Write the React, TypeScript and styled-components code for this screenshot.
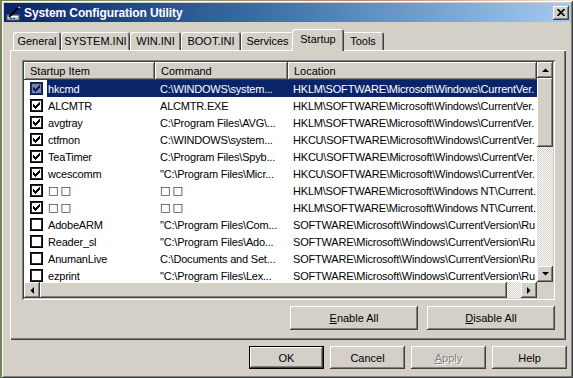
import React from 'react';
import styled, { createGlobalStyle, css } from 'styled-components';

const face = '#D4D0C8';
const shadow = '#808080';
const dark = '#404040';

const GlobalStyle = createGlobalStyle`
  html, body { margin: 0; padding: 0; }
  body {
    width: 573px;
    height: 378px;
    overflow: hidden;
    background: linear-gradient(90deg, #71825a 0%, #8f9a78 35%, #b08a82 62%, #c9a6a0 78%, #e8e8e0 100%);
    font-family: "Liberation Sans", Arial, sans-serif;
    font-size: 11px;
  }
`;

const raised = css`
  box-shadow: inset -1px -1px ${dark}, inset 1px 1px #fff, inset -2px -2px ${shadow}, inset 2px 2px ${face};
`;

const sunken = css`
  box-shadow: inset 1px 1px ${shadow}, inset -1px -1px #fff, inset 2px 2px ${dark}, inset -2px -2px ${face};
`;

const dither = css`
  background: repeating-conic-gradient(${face} 0 25%, #fff 0 50%) 0 0 / 2px 2px;
`;

const Window = styled.div`
  margin: 1px 0 0 2px;
  width: 571px;
  height: 377px;
  box-sizing: border-box;
  padding: 2px 2px 0 2px;
  background: ${face};
  ${raised};
  display: flex;
  flex-direction: column;
`;

const TitleBar = styled.div`
  height: 19px;
  display: flex;
  align-items: center;
  padding-left: 2px;
  background: linear-gradient(90deg, #0a246a 0%, #3a6ea5 45%, #a6caf0 100%);
  color: #fff;
  font-weight: bold;
  font-size: 12px;
  letter-spacing: -0.1px;
`;

const TitleText = styled.span`
  margin-left: 2px;
  flex: 1;
  white-space: nowrap;
`;

const CloseButton = styled.div`
  width: 16px;
  height: 14px;
  margin-right: 2px;
  box-sizing: border-box;
  background: ${face};
  ${raised};
  display: flex;
  align-items: center;
  justify-content: center;
`;

const Body = styled.div`
  padding: 7px 4px 0 6px;
  display: flex;
  flex-direction: column;
`;

const TabStrip = styled.div`
  display: flex;
  align-items: flex-end;
  height: 21px;
  padding-left: 3px;
`;

const Tab = styled.div<{ $w: number; $active?: boolean }>`
  width: ${p => (p.$active ? p.$w + 4 : p.$w)}px;
  height: ${p => (p.$active ? 22 : 18)}px;
  margin: ${p => (p.$active ? '0 -2px -1px' : '0')};
  position: ${p => (p.$active ? 'relative' : 'static')};
  z-index: ${p => (p.$active ? 1 : 0)};
  box-sizing: border-box;
  padding-top: ${p => (p.$active ? 4 : 3)}px;
  text-align: center;
  background: ${face};
  border-radius: 3px 3px 0 0;
  box-shadow: inset 1px 1px #fff, inset -1px 0 ${dark}, inset -2px 0 ${shadow};
  white-space: nowrap;
`;

const Panel = styled.div`
  height: 290px;
  margin-right: 1px;
  box-sizing: border-box;
  padding: 10px 11px 0 12px;
  background: ${face};
  box-shadow: inset 1px 1px #fff, inset -1px -1px ${dark}, inset -2px -2px ${shadow};
`;

const ListView = styled.div`
  height: 240px;
  box-sizing: border-box;
  padding: 2px;
  background: #fff;
  ${sunken};
  display: grid;
  grid-template-columns: 1fr 16px;
  grid-template-rows: 220px 16px;
  overflow: hidden;
`;

const ListMain = styled.div`
  overflow: hidden;
  display: flex;
  flex-direction: column;
`;

const HeaderRow = styled.div`
  display: grid;
  grid-template-columns: 131px 133px 1fr;
  height: 18px;
  flex: none;
`;

const HeaderCell = styled.div`
  box-sizing: border-box;
  padding: 3px 0 0 6px;
  background: ${face};
  box-shadow: inset -1px -1px ${dark}, inset 1px 1px #fff, inset -2px -2px ${shadow};
  white-space: nowrap;
  overflow: hidden;
`;

const Row = styled.div`
  display: grid;
  grid-template-columns: 131px 133px 1fr;
  height: 17px;
  flex: none;
  letter-spacing: -0.2px;
`;

const FirstCell = styled.div`
  display: flex;
  align-items: center;
  padding-left: 6px;
  overflow: hidden;
`;

const Cell = styled.div<{ $sel?: boolean }>`
  display: flex;
  align-items: center;
  padding-left: ${p => (p.$sel ? 0 : 5)}px;
  white-space: nowrap;
  overflow: hidden;
  background: ${p => (p.$sel ? '#0a246a' : 'transparent')};
  color: ${p => (p.$sel ? '#fff' : '#000')};
`;

const Label = styled(Cell)`
  flex: 1;
  align-self: stretch;
  margin-left: 4px;
  padding-left: 1px;
`;

const SelCell = styled(Cell)`
  padding-left: 5px;
`;

const Tofu = styled.span`
  font-family: "DejaVu Sans", sans-serif;
  font-size: 11px;
  letter-spacing: 2px;
`;

const Box = styled.div<{ $sel?: boolean }>`
  width: 13px;
  height: 13px;
  flex: none;
  box-sizing: border-box;
  border: 1px solid ${p => (p.$sel ? '#0a1a50' : '#000')};
  box-shadow: inset 0 0 0 1px ${p => (p.$sel ? '#202c68' : '#2a2a2a')};
  background: ${p => (p.$sel ? '#7a80a8' : '#fff')};
  display: flex;
  align-items: center;
  justify-content: center;
`;

const VScroll = styled.div`
  display: flex;
  flex-direction: column;
  ${dither};
`;

const HScroll = styled.div`
  display: flex;
  ${dither};
`;

const ArrowButton = styled.div`
  width: 16px;
  height: 16px;
  flex: none;
  box-sizing: border-box;
  background: ${face};
  ${raised};
  display: flex;
  align-items: center;
  justify-content: center;
`;

const Thumb = styled.div<{ $len: number; $vertical?: boolean }>`
  ${p => (p.$vertical ? `height: ${p.$len}px;` : `width: ${p.$len}px;`)}
  flex: none;
  background: ${face};
  ${raised};
`;

const Track = styled.div`
  flex: 1;
`;

const Corner = styled.div`
  background: ${face};
`;

const PanelButtons = styled.div`
  display: flex;
  justify-content: flex-end;
  gap: 9px;
  margin-top: 6px;
`;

const Button = styled.button<{ $w?: number; $h?: number; $default?: boolean }>`
  width: ${p => p.$w ?? 75}px;
  height: ${p => p.$h ?? 23}px;
  padding: 0;
  margin: 0;
  border: ${p => (p.$default ? '1px solid #000' : 'none')};
  background: ${face};
  ${raised};
  font-family: "Liberation Sans", Arial, sans-serif;
  font-size: 11px;
  color: #000;
  &:disabled {
    color: ${shadow};
    text-shadow: 1px 1px #fff;
  }
`;

const DialogButtons = styled.div`
  display: flex;
  justify-content: flex-end;
  gap: 6px;
  margin-top: 6px;
`;

type Dir = 'up' | 'down' | 'left' | 'right';

const Arrow = ({ dir }: { dir: Dir }) => {
  const pts: Record<Dir, string> = {
    up: '0,4 7,4 3.5,0.5',
    down: '0,0 7,0 3.5,3.5',
    left: '4,0 4,7 0.5,3.5',
    right: '0,0 0,7 3.5,3.5',
  };
  const vert = dir === 'up' || dir === 'down';
  return (
    <svg width={vert ? 7 : 4} height={vert ? 4 : 7} viewBox={vert ? '0 0 7 4' : '0 0 4 7'}>
      <polygon points={pts[dir]} fill="#000" />
    </svg>
  );
};

const Check = ({ color }: { color: string }) => (
  <svg width="7" height="7" viewBox="0 0 7 7">
    {[2, 3, 4, 3, 2, 1, 0].map((y, x) => (
      <rect key={x} x={x} y={y} width="1" height="3" fill={color} />
    ))}
  </svg>
);

const AppIcon = () => (
  <svg width="16" height="16" viewBox="0 0 16 16">
    <rect x="1" y="10" width="12" height="5" fill="#c8c8c8" stroke="#606060" strokeWidth="1" />
    <rect x="2" y="11" width="10" height="1" fill="#fff" />
    <path d="M3 12 L12 3" stroke="#000" strokeWidth="2" />
    <path d="M11 2 L14 1 L14.5 4 Z" fill="#fff" stroke="#202020" strokeWidth="0.8" />
    <rect x="4" y="13" width="2" height="1" fill="#1d3c9a" />
    <rect x="7" y="13" width="2" height="1" fill="#1d3c9a" />
  </svg>
);

const CloseGlyph = () => (
  <svg width="8" height="7" viewBox="0 0 8 7">
    <path d="M0.5 0 L7.5 7 M7.5 0 L0.5 7" stroke="#000" strokeWidth="1.6" />
  </svg>
);

interface Item {
  name: string;
  cmd: string;
  loc: string;
  on: boolean;
}

const TOFU = '□□';

const items: Item[] = [
  { name: 'hkcmd', cmd: 'C:\\WINDOWS\\system...', loc: 'HKLM\\SOFTWARE\\Microsoft\\Windows\\CurrentVer.', on: true },
  { name: 'ALCMTR', cmd: 'ALCMTR.EXE', loc: 'HKLM\\SOFTWARE\\Microsoft\\Windows\\CurrentVer.', on: true },
  { name: 'avgtray', cmd: 'C:\\Program Files\\AVG\\...', loc: 'HKLM\\SOFTWARE\\Microsoft\\Windows\\CurrentVer.', on: true },
  { name: 'ctfmon', cmd: 'C:\\WINDOWS\\system...', loc: 'HKCU\\SOFTWARE\\Microsoft\\Windows\\CurrentVer.', on: true },
  { name: 'TeaTimer', cmd: 'C:\\Program Files\\Spyb...', loc: 'HKCU\\SOFTWARE\\Microsoft\\Windows\\CurrentVer.', on: true },
  { name: 'wcescomm', cmd: '"C:\\Program Files\\Micr...', loc: 'HKCU\\SOFTWARE\\Microsoft\\Windows\\CurrentVer.', on: true },
  { name: TOFU, cmd: TOFU, loc: 'HKLM\\SOFTWARE\\Microsoft\\Windows NT\\Current.', on: true },
  { name: TOFU, cmd: TOFU, loc: 'HKLM\\SOFTWARE\\Microsoft\\Windows NT\\Current.', on: true },
  { name: 'AdobeARM', cmd: '"C:\\Program Files\\Com...', loc: 'SOFTWARE\\Microsoft\\Windows\\CurrentVersion\\Ru', on: false },
  { name: 'Reader_sl', cmd: '"C:\\Program Files\\Ado...', loc: 'SOFTWARE\\Microsoft\\Windows\\CurrentVersion\\Ru', on: false },
  { name: 'AnumanLive', cmd: 'C:\\Documents and Set...', loc: 'SOFTWARE\\Microsoft\\Windows\\CurrentVersion\\Ru', on: false },
  { name: 'ezprint', cmd: '"C:\\Program Files\\Lex...', loc: 'SOFTWARE\\Microsoft\\Windows\\CurrentVersion\\Ru', on: false },
];

const tabs = [
  { label: 'General', w: 48 },
  { label: 'SYSTEM.INI', w: 69 },
  { label: 'WIN.INI', w: 51 },
  { label: 'BOOT.INI', w: 60 },
  { label: 'Services', w: 53 },
  { label: 'Startup', w: 48, active: true },
  { label: 'Tools', w: 42 },
];

const show = (s: string) => (s === TOFU ? <Tofu>{s}</Tofu> : s);

export default function App() {
  return (
    <>
      <GlobalStyle />
      <Window>
        <TitleBar>
          <AppIcon />
          <TitleText>System Configuration Utility</TitleText>
          <CloseButton>
            <CloseGlyph />
          </CloseButton>
        </TitleBar>
        <Body>
          <TabStrip>
            {tabs.map(t => (
              <Tab key={t.label} $w={t.w} $active={t.active}>
                {t.label}
              </Tab>
            ))}
          </TabStrip>
          <Panel>
            <ListView>
              <ListMain>
                <HeaderRow>
                  <HeaderCell>Startup Item</HeaderCell>
                  <HeaderCell>Command</HeaderCell>
                  <HeaderCell>Location</HeaderCell>
                </HeaderRow>
                {items.map((it, i) => {
                  const sel = i === 0;
                  return (
                    <Row key={i}>
                      <FirstCell>
                        <Box $sel={sel}>{it.on && <Check color={sel ? '#0a1a50' : '#000'} />}</Box>
                        <Label $sel={sel}>{show(it.name)}</Label>
                      </FirstCell>
                      <SelCell $sel={sel}>{show(it.cmd)}</SelCell>
                      <SelCell $sel={sel}>{it.loc}</SelCell>
                    </Row>
                  );
                })}
              </ListMain>
              <VScroll>
                <ArrowButton>
                  <Arrow dir="up" />
                </ArrowButton>
                <Thumb $vertical $len={69} />
                <Track />
                <ArrowButton>
                  <Arrow dir="down" />
                </ArrowButton>
              </VScroll>
              <HScroll>
                <ArrowButton>
                  <Arrow dir="left" />
                </ArrowButton>
                <Thumb $len={467} />
                <Track />
                <ArrowButton>
                  <Arrow dir="right" />
                </ArrowButton>
              </HScroll>
              <Corner />
            </ListView>
            <PanelButtons>
              <Button $w={128} $h={24}>
                <u>E</u>nable All
              </Button>
              <Button $w={128} $h={24}>
                <u>D</u>isable All
              </Button>
            </PanelButtons>
          </Panel>
          <DialogButtons>
            <Button $default>OK</Button>
            <Button>Cancel</Button>
            <Button disabled>
              <u>A</u>pply
            </Button>
            <Button>Help</Button>
          </DialogButtons>
        </Body>
      </Window>
    </>
  );
}
